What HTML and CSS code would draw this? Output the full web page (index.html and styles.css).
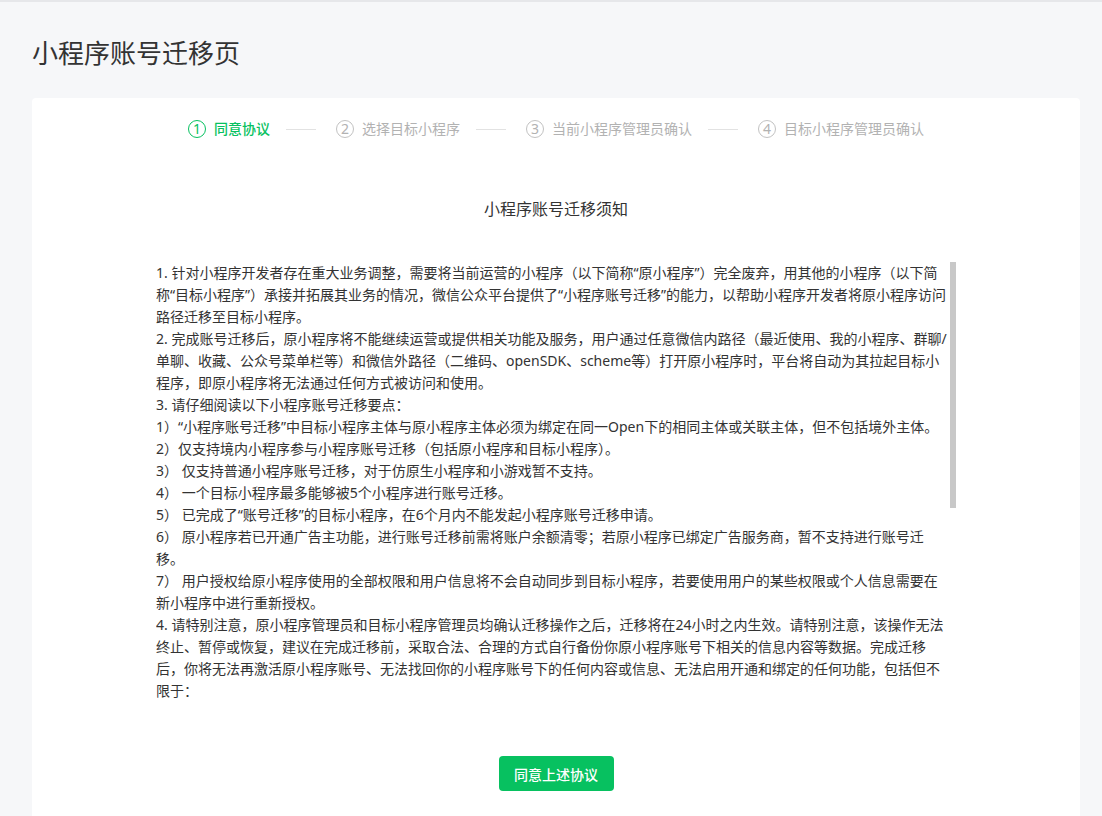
FILE: index.html
```html
<!DOCTYPE html>
<html lang="zh-CN">
<head>
	<meta charset="UTF-8">
	<meta name="viewport" content="width=device-width, initial-scale=1.0">
	<title>小程序账号迁移页</title>
	<link rel="stylesheet" href="styles.css">
</head>
<body>
	<div class="page">
		<h1 class="page-title">小程序账号迁移页</h1>

		<div class="card">
			<div class="steps">
				<div class="step active"><span class="num">1</span><span class="label">同意协议</span></div>
				<div class="step-line"></div>
				<div class="step"><span class="num">2</span><span class="label">选择目标小程序</span></div>
				<div class="step-line"></div>
				<div class="step"><span class="num">3</span><span class="label">当前小程序管理员确认</span></div>
				<div class="step-line"></div>
				<div class="step"><span class="num">4</span><span class="label">目标小程序管理员确认</span></div>
			</div>

			<h2 class="notice-title">小程序账号迁移须知</h2>

			<div class="notice-wrap">
				<div class="notice">
					<p>1. 针对小程序开发者存在重大业务调整，需要将当前运营的小程序（以下简称“原小程序”）完全废弃，用其他的小程序（以下简称“目标小程序”）承接并拓展其业务的情况，微信公众平台提供了“小程序账号迁移”的能力，以帮助小程序开发者将原小程序访问路径迁移至目标小程序。</p>
					<p>2. 完成账号迁移后，原小程序将不能继续运营或提供相关功能及服务，用户通过任意微信内路径（最近使用、我的小程序、群聊/单聊、收藏、公众号菜单栏等）和微信外路径（二维码、openSDK、scheme等）打开原小程序时，平台将自动为其拉起目标小程序，即原小程序将无法通过任何方式被访问和使用。</p>
					<p>3. 请仔细阅读以下小程序账号迁移要点：</p>
					<p>1）“小程序账号迁移”中目标小程序主体与原小程序主体必须为绑定在同一Open下的相同主体或关联主体，但不包括境外主体。</p>
					<p>2）仅支持境内小程序参与小程序账号迁移（包括原小程序和目标小程序）。</p>
					<p>3） 仅支持普通小程序账号迁移，对于仿原生小程序和小游戏暂不支持。</p>
					<p>4） 一个目标小程序最多能够被5个小程序进行账号迁移。</p>
					<p>5） 已完成了“账号迁移”的目标小程序，在6个月内不能发起小程序账号迁移申请。</p>
					<p>6） 原小程序若已开通广告主功能，进行账号迁移前需将账户余额清零；若原小程序已绑定广告服务商，暂不支持进行账号迁移。</p>
					<p>7） 用户授权给原小程序使用的全部权限和用户信息将不会自动同步到目标小程序，若要使用用户的某些权限或个人信息需要在新小程序中进行重新授权。</p>
					<p>4. 请特别注意，原小程序管理员和目标小程序管理员均确认迁移操作之后，迁移将在24小时之内生效。请特别注意，该操作无法终止、暂停或恢复，建议在完成迁移前，采取合法、合理的方式自行备份你原小程序账号下相关的信息内容等数据。完成迁移后，你将无法再激活原小程序账号、无法找回你的小程序账号下的任何内容或信息、无法启用开通和绑定的任何功能，包括但不限于：</p>
				</div>
				<div class="scroll-thumb"></div>
			</div>

			<div class="actions">
				<button class="btn-primary" type="button">同意上述协议</button>
			</div>
		</div>
	</div>
</body>
</html>
```

FILE: styles.css
```css
html, body {
	margin: 0;
	padding: 0;
}

body {
	background-color: #f6f7f9;
	border-top: 2px solid #e6e7ea;
	font-family: "Noto Sans", "Noto Sans CJK SC", sans-serif;
	color: #333;
}

.page {
	padding: 0 22px 0 32px;
}

.page-title {
	margin: 0;
	padding-top: 35px;
	font-size: 26px;
	line-height: 32px;
	font-weight: normal;
	color: #333;
}

.card {
	margin-top: 29px;
	background-color: #fff;
	border-radius: 4px 4px 0 0;
	padding: 21px 0 40px;
}

.steps {
	display: flex;
	justify-content: center;
	align-items: center;
	font-size: 14px;
	line-height: 20px;
	color: #b2b2b2;
}

.step {
	display: flex;
	align-items: center;
}

.step .num {
	box-sizing: border-box;
	width: 18px;
	height: 18px;
	border: 1px solid #c2c2c2;
	border-radius: 50%;
	display: flex;
	align-items: center;
	justify-content: center;
	font-size: 14px;
	line-height: 1;
	margin-right: 8px;
}

.step.active {
	color: #07c160;
	font-weight: 500;
}

.step.active .num {
	border-color: #07c160;
	font-weight: normal;
}

.step-line {
	width: 30px;
	height: 1px;
	background-color: #e2e2e2;
	margin: 0 20px 0 16px;
}

.notice-title {
	margin: 59px 0 0;
	text-align: center;
	font-size: 16px;
	line-height: 22px;
	font-weight: normal;
	color: #333;
}

.notice-wrap {
	position: relative;
	width: 800px;
	margin: 42px auto 0;
}

.notice {
	height: 440px;
	box-sizing: border-box;
	padding-right: 7px;
	overflow: hidden;
	font-size: 14px;
	line-height: 22px;
	color: #333;
}

.notice p {
	margin: 0;
}

.scroll-thumb {
	position: absolute;
	top: 0;
	right: 0;
	width: 6px;
	height: 246px;
	background-color: #c8c8c8;
}

.actions {
	margin-top: 54px;
	text-align: center;
}

.btn-primary {
	background-color: #07c160;
	color: #fff;
	border: none;
	border-radius: 4px;
	width: 115px;
	height: 35px;
	font-family: inherit;
	font-size: 14px;
	font-weight: 500;
	cursor: pointer;
}
```
